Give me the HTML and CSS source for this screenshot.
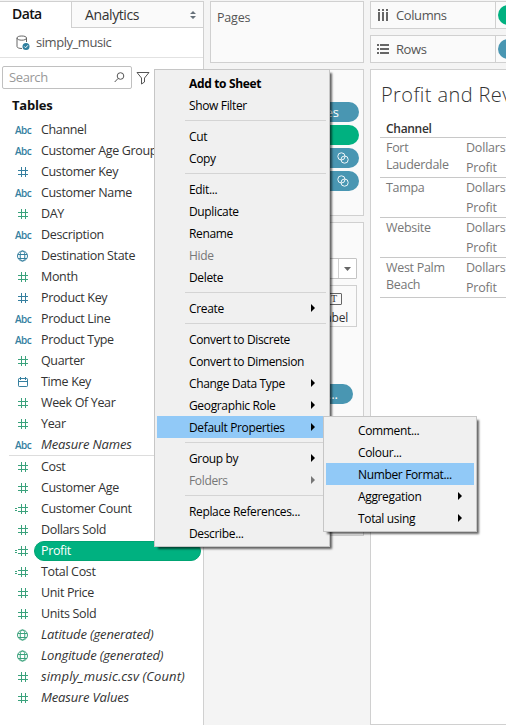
FILE: index.html
```html
<!DOCTYPE html>
<html lang="en">
<head>
<meta charset="utf-8">
<title>Profit and Revenue</title>
<link rel="stylesheet" href="styles.css">
</head>
<body>
<svg class="defs" aria-hidden="true">
  <symbol id="hash" viewBox="0 0 16 12"><path d="M6.5 1v10M10.5 1v10M3 4.5h10M3 8.5h10"/></symbol>
  <symbol id="calc" viewBox="0 0 16 12"><path d="M6.5 1v10M10.5 1v10M3 4.5h10M3 8.500h10M-1 5.500h3M-1 7.500h3"/></symbol>
  <symbol id="globe" viewBox="0 0 16 12"><circle cx="7.5" cy="6" r="5"/><ellipse cx="7.5" cy="6" rx="2.3" ry="5"/><path d="M3 4.500h9M3 8.500h9"/></symbol>
  <symbol id="cal" viewBox="0 0 16 12"><rect x="3.5" y="2.5" width="9" height="8" rx=".7"/><path d="M3.5 5.5h9M5.5 1v3M10.5 1v3"/></symbol>
  <symbol id="link" viewBox="0 0 12 12"><circle cx="4.4" cy="4.4" r="3.6"/><circle cx="7.6" cy="7.6" r="3.6"/></symbol>
</svg>
<div class="app">
  <aside class="data">
    <div class="tabs"><div class="tab on">Data</div><div class="tab off">Analytics<svg width="6" height="8" viewBox="0 0 6 8"><path d="M3 0l3 3H0zM3 8l3-3H0z"/></svg></div></div>
    <div class="source"><svg width="14" height="16" viewBox="0 0 14 16"><path class="line" d="M10.500 7V3M1 3v8.500c0 1.200 2 2 5 2M1 3c0-1.300 2-2 4.800-2s4.700.7 4.700 2-2 2.200-4.700 2.200S1 4.300 1 3z"/><circle cx="10" cy="11.500" r="3.500"/><path class="tick" d="M8.300 11.500l1.300 1.300 2.300-2.500"/></svg><span>simply_music</span></div>
    <div class="find"><div class="search"><span>Search</span><svg width="11" height="11" viewBox="0 0 11 11"><circle cx="6.500" cy="4" r="3.300"/><path d="M4 6.500L.7 10"/></svg></div><svg class="funnel" width="14" height="14" viewBox="0 0 14 14"><path d="M1 1.500h12L8.500 7v4L5.500 13V7z"/></svg></div>
    <div class="heading">Tables</div>
    <ul class="fields">
      <li><b>Abc</b><span>Channel</span></li>
      <li><b>Abc</b><span>Customer Age Group</span></li>
      <li><svg class="dim"><use href="#hash"/></svg><span>Customer Key</span></li>
      <li><b>Abc</b><span>Customer Name</span></li>
      <li><svg><use href="#hash"/></svg><span>DAY</span></li>
      <li><b>Abc</b><span>Description</span></li>
      <li><svg class="dim"><use href="#globe"/></svg><span>Destination State</span></li>
      <li><svg><use href="#hash"/></svg><span>Month</span></li>
      <li><svg class="dim"><use href="#hash"/></svg><span>Product Key</span></li>
      <li><b>Abc</b><span>Product Line</span></li>
      <li><b>Abc</b><span>Product Type</span></li>
      <li><svg><use href="#hash"/></svg><span>Quarter</span></li>
      <li><svg class="dim"><use href="#cal"/></svg><span>Time Key</span></li>
      <li><svg><use href="#hash"/></svg><span>Week Of Year</span></li>
      <li><svg><use href="#hash"/></svg><span>Year</span></li>
      <li><b>Abc</b><i>Measure Names</i></li>
    </ul>
    <ul class="fields measures">
      <li><svg><use href="#hash"/></svg><span>Cost</span></li>
      <li><svg><use href="#hash"/></svg><span>Customer Age</span></li>
      <li><svg><use href="#calc"/></svg><span>Customer Count</span></li>
      <li><svg><use href="#hash"/></svg><span>Dollars Sold</span></li>
      <li><svg><use href="#calc"/></svg><span class="selected">Profit</span></li>
      <li><svg><use href="#calc"/></svg><span>Total Cost</span></li>
      <li><svg><use href="#hash"/></svg><span>Unit Price</span></li>
      <li><svg><use href="#hash"/></svg><span>Units Sold</span></li>
      <li><svg><use href="#globe"/></svg><i>Latitude (generated)</i></li>
      <li><svg><use href="#globe"/></svg><i>Longitude (generated)</i></li>
      <li><svg><use href="#hash"/></svg><i class="wide">simply_music.csv (Count)</i></li>
      <li><svg><use href="#hash"/></svg><i>Measure Values</i></li>
    </ul>
  </aside>
  <section class="cards">
    <div class="card pages">Pages</div>
    <div class="card filters">
      <div class="pill">es</div><div class="pill green"></div>
      <div class="pill"><svg width="12" height="12"><use href="#link"/></svg></div>
      <div class="pill"><svg width="12" height="12"><use href="#link"/></svg></div>
    </div>
    <div class="card marks">
      <div class="select"><div><svg width="7" height="4" viewBox="0 0 7 4"><path d="M0 0h7L3.500 4z"/></svg></div></div>
      <div class="label"><div class="tbox">T</div><span>Label</span></div>
      <div class="pill short">...</div>
    </div>
  </section>
  <main class="view">
    <div class="shelf"><div class="name"><svg width="12" height="12" viewBox="0 0 12 12"><path d="M1 0h2v2H1zM5 0h2v2H5zM9 0h2v2H9zM1 3h2v9H1zM5 3h2v9H5zM9 3h2v9H9z"/></svg>Columns</div><div class="drop"><div class="pill green"></div></div></div>
    <div class="shelf"><div class="name"><svg width="12" height="12" viewBox="0 0 12 12"><path d="M0 1h2v2H0zM0 5h2v2H0zM0 9h2v2H0zM3 1h9v2H3zM3 5h9v2H3zM3 9h9v2H3z"/></svg>Rows</div><div class="drop"><div class="pill"></div></div></div>
    <div class="sheet">
      <h1>Profit and Rev</h1>
      <div class="th">Channel</div>
      <div class="tr"><div>Fort<br>Lauderdale</div><p>Dollars<br>Profit</p></div>
      <div class="tr"><div>Tampa</div><p>Dollars<br>Profit</p></div>
      <div class="tr"><div>Website</div><p>Dollars<br>Profit</p></div>
      <div class="tr"><div>West Palm<br>Beach</div><p>Dollars<br>Profit</p></div>
    </div>
  </main>
</div>
<nav class="menu main-menu">
  <div class="item strong">Add to Sheet</div>
  <div class="item">Show Filter</div>
  <hr>
  <div class="item">Cut</div>
  <div class="item">Copy</div>
  <hr>
  <div class="item">Edit...</div>
  <div class="item">Duplicate</div>
  <div class="item">Rename</div>
  <div class="item disabled">Hide</div>
  <div class="item">Delete</div>
  <hr>
  <div class="item more">Create</div>
  <hr>
  <div class="item">Convert to Discrete</div>
  <div class="item">Convert to Dimension</div>
  <div class="item more">Change Data Type</div>
  <div class="item more">Geographic Role</div>
  <div class="item more hot">Default Properties</div>
  <hr>
  <div class="item more">Group by</div>
  <div class="item more disabled">Folders</div>
  <hr>
  <div class="item">Replace References...</div>
  <div class="item">Describe...</div>
</nav>
<nav class="menu sub-menu">
  <div class="item">Comment...</div>
  <div class="item">Colour...</div>
  <div class="item hot">Number Format...</div>
  <div class="item more">Aggregation</div>
  <div class="item more">Total using</div>
</nav>
</body>
</html>
```
FILE: styles.css
```css
* { box-sizing: border-box; }
body { margin: 0; width: 506px; height: 725px; overflow: hidden; background: #f4f4f4; font: 13px/21px "Open Sans", "Noto Sans", sans-serif; color: #333; }
.defs { display: none; }
.app { display: flex; height: 725px; padding-top: 1px; overflow: hidden; }
svg { flex: none; fill: none; stroke: none; }

.data { width: 204px; flex: none; background: #fff; border-right: 1px solid #d0d0d0; border-top: 1px solid #d0d0d0; }
.tabs { display: flex; height: 26px; font-size: 14px; line-height: 24px; }
.tab.on { width: 71px; padding-left: 12px; font-weight: 600; color: #111; letter-spacing: -.6px; }
.tab.off { flex: 1; display: flex; align-items: center; justify-content: space-between; padding: 0 7px 0 13px; background: #fafafa; border-left: 1px solid #d0d0d0; border-bottom: 1px solid #d0d0d0; letter-spacing: -.4px; }
.tab.off svg { fill: #667079; }
.source { display: flex; align-items: center; height: 30px; padding-left: 16px; gap: 6px; border-bottom: 1px solid #e2e2e2; letter-spacing: -.45px; color: #555; }
.source svg { fill: #2f7f9f; }
.source .line { fill: none; stroke: #666; }
.source .tick { fill: none; stroke: #fff; }
.find { display: flex; align-items: center; height: 39px; padding-left: 2px; gap: 4px; }
.search { display: flex; align-items: center; justify-content: space-between; width: 130px; height: 23px; padding: 0 6px; border: 1px solid #c0c0c0; border-radius: 2px; color: #999; letter-spacing: -.4px; }
.search svg, .funnel { stroke: #555; }
.heading { height: 22px; padding-left: 12px; line-height: 16px; font-weight: 700; color: #111; letter-spacing: -.2px; }
.fields { list-style: none; margin: 0; padding: 0; }
.fields li { display: flex; align-items: center; height: 21px; padding-left: 15px; white-space: nowrap; }
.fields svg { width: 16px; height: 12px; margin: 1px 10px 0 0; overflow: visible; stroke: #3aa27c; }
.fields svg.dim { stroke: #357f9f; }
.fields b { width: 26px; font: 600 10px/21px "Open Sans", sans-serif; color: #357f9f; padding-top: 1px; letter-spacing: -.5px; }
.fields span { font-size: 12.500px; letter-spacing: -.35px; }
.fields i { letter-spacing: -.15px; }
.fields .wide { letter-spacing: .1px; }
.measures { margin-left: 9px; border-top: 1px solid #ddd; }
.measures li { padding-left: 6px; }
.fields .selected { width: 167px; height: 20px; margin-left: -7px; padding-left: 6px; line-height: 18px; border-radius: 10px; border: 1px solid #00a473; background: #00b180; color: #fff; }

.cards { width: 154px; margin-left: 6px; flex: none; display: flex; flex-direction: column; gap: 6px; }
.card { border: 1px solid #d0d0d0; background: #fafafa; }
.pages { height: 62px; padding: 5px 6px; color: #555; font-size: 12.500px; letter-spacing: -.2px; }
.filters { height: 147px; padding: 32px 4px 0; display: flex; flex-direction: column; gap: 3px; }
.pill { display: flex; align-items: center; justify-content: flex-end; height: 20px; border-radius: 10px; background: #4996b2; color: #fff; padding-right: 20px; }
.pill.green { background: #00b180; }
.pill svg { stroke: #fff; stroke-width: .9; margin-right: -10px; }
.marks { height: 314px; padding: 35px 6px 0 7px; }
.select { display: flex; justify-content: flex-end; height: 21px; border: 1px solid #c4c4c4; background: #fff; border-radius: 1px; }
.select div { display: flex; align-items: center; justify-content: center; width: 18px; border-left: 1px solid #d0d0d0; }
.select svg { fill: #666; }
.label { display: flex; flex-direction: column; align-items: center; width: 51px; height: 42px; margin: 6px 0 0 auto; padding-top: 7px; border: 1px solid #d0d0d0; font-size: 12px; letter-spacing: -.2px; }
.label span { line-height: 16px; padding-top: 3px; margin-left: 4px; }
.tbox { width: 15px; height: 12px; border: 1px solid #666; border-radius: 1px; font: 10px/10px "Liberation Serif", serif; text-align: center; margin: 0 0 2px 5px; flex: none; }
.pill.short { margin: 57px 4px 0 0; padding-right: 15px; }

.view { flex: 1; min-width: 0; margin-left: 6px; display: flex; flex-direction: column; }
.shelf { display: flex; flex: none; height: 28px; margin-bottom: 6px; border: 1px solid #d0d0d0; border-right: 0; background: #fafafa; color: #555; }
.name { display: flex; align-items: center; width: 125px; flex: none; padding-left: 6px; gap: 7px; letter-spacing: -.4px; border-right: 1px solid #d0d0d0; }
.name svg { fill: #666; }
.drop { flex: 1; overflow: hidden; padding: 3px 0 0 2px; }
.drop .pill { width: 100px; }
.sheet { flex: 1; border: 1px solid #d0d0d0; border-right: 0; background: #fff; padding-left: 9px; overflow: hidden; white-space: nowrap; }
h1 { margin: 0; padding: 10px 0 0 1px; height: 49px; font-size: 20px; line-height: 30px; font-weight: 300; letter-spacing: .4px; }
.th { height: 19px; padding-left: 6px; line-height: 20px; font-size: 12px; font-weight: 600; letter-spacing: -.3px; border-bottom: 1px solid #c8c8c8; }
.tr { display: flex; height: 40px; padding-left: 6px; border-bottom: 1px solid #c8c8c8; font-size: 12.500px; letter-spacing: -.3px; color: #777; }
.tr div { width: 80px; flex: none; line-height: 17px; padding-top: 1px; }
.tr p { margin: 0; line-height: 20px; letter-spacing: -.2px; }

.menu { position: absolute; padding: 2px; background: #f0f0f0; border: 1px solid #c6c6c6; box-shadow: 3px 3px 2px -1px #0009; color: #000; font-size: 12px; }
.main-menu { left: 154px; top: 69px; width: 176px; height: 478px; }
.sub-menu { left: 323px; top: 416px; width: 154px; height: 116px; }
.item { display: flex; align-items: center; height: 22px; padding: 2px 12px 0 32px; line-height: 20px; white-space: nowrap; letter-spacing: -.35px; }
.strong { font-weight: 700; }
.disabled { color: #777; }
.hot { background: #91c9f7; }
.more::after { content: ""; margin-left: auto; margin-top: -3px; border-left: 4px solid; border-top: 4px solid transparent; border-bottom: 4px solid transparent; }
.menu hr { height: 1px; margin: 4px 1px 4px 28px; border: 0; background: #d4d4d4; }
```
